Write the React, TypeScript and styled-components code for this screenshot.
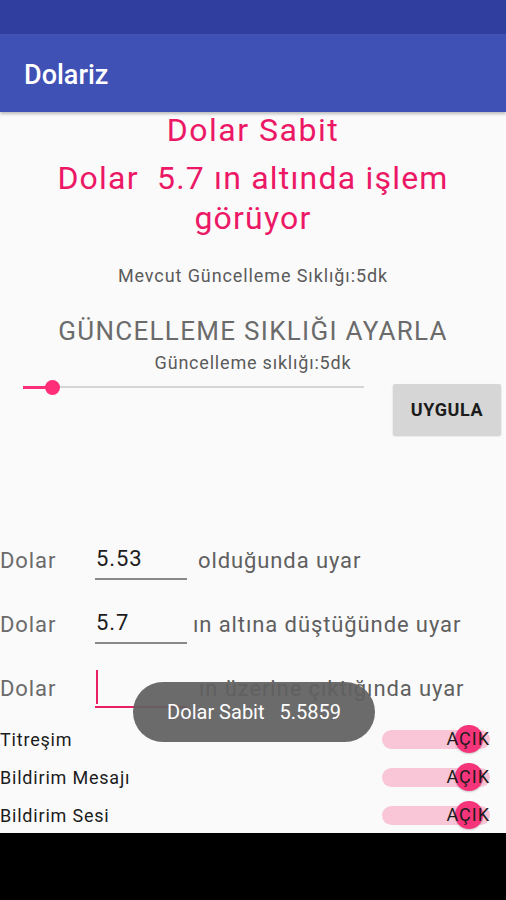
import styled, { createGlobalStyle } from "styled-components";

const GlobalStyle = createGlobalStyle`
  html, body {
    margin: 0;
    padding: 0;
    background: #000;
  }
  body {
    font-family: Roboto, "Noto Sans", sans-serif;
  }
`;

interface AlertRow {
  value: string;
  suffix: string;
  gap: number;
  focused?: boolean;
}

const alerts: AlertRow[] = [
  { value: "5.53", suffix: "olduğunda uyar", gap: 11 },
  { value: "5.7", suffix: "ın altına düştüğünde uyar", gap: 6 },
  { value: "", suffix: "ın üzerine çıktığında uyar", gap: 12, focused: true }
];

const toggles = ["Titreşim", "Bildirim Mesajı", "Bildirim Sesi"];

const App = () => {
  return (
    <>
      <GlobalStyle />
      <Screen>
        <StatusBar />
        <AppBar>
          <AppTitle>Dolariz</AppTitle>
        </AppBar>
        <Content>
          <Headline>Dolar Sabit</Headline>
          <SubHeadline>
            {"Dolar  5.7 ın altında işlem"}
            <br />
            görüyor
          </SubHeadline>
          <Current>Mevcut Güncelleme Sıklığı:5dk</Current>
          <SectionTitle>GÜNCELLEME SIKLIĞI AYARLA</SectionTitle>
          <Frequency>Güncelleme sıklığı:5dk</Frequency>
          <SliderRow>
            <Slider>
              <Track>
                <Fill style={{ width: 29 }} />
                <Thumb />
                <Rest />
              </Track>
            </Slider>
            <ApplyButton>UYGULA</ApplyButton>
          </SliderRow>
          <Alerts>
            {alerts.map((a, i) => (
              <Row key={i}>
                <RowLabel>Dolar</RowLabel>
                <Field $focused={a.focused}>
                  {a.focused ? <Cursor /> : a.value}
                </Field>
                <Suffix $gap={a.gap}>{a.suffix}</Suffix>
              </Row>
            ))}
          </Alerts>
          <Toggles>
            {toggles.map((t) => (
              <ToggleRow key={t}>
                <ToggleLabel>{t}</ToggleLabel>
                <Switch>
                  <SwitchTrack />
                  <SwitchThumb />
                  <SwitchText>AÇIK</SwitchText>
                </Switch>
              </ToggleRow>
            ))}
          </Toggles>
          <Toast>{"Dolar Sabit   5.5859"}</Toast>
        </Content>
      </Screen>
    </>
  );
};

const Screen = styled.div`
  width: 506px;
  height: 900px;
  display: flex;
  flex-direction: column;
  background: #000;
  overflow: hidden;
`;
const StatusBar = styled.div`
  height: 34px;
  background: #303f9f;
`;
const AppBar = styled.div`
  height: 78px;
  box-sizing: border-box;
  padding: 3px 0 0 24px;
  background: #3f51b5;
  display: flex;
  align-items: center;
  box-shadow: 0 2px 3px rgba(0, 0, 0, 0.25);
  position: relative;
  z-index: 1;
`;
const AppTitle = styled.h1`
  margin: 0;
  color: #fff;
  font-size: 27px;
  font-weight: 500;
`;
const Content = styled.div`
  position: relative;
  height: 721px;
  background: #fafafa;
  display: flex;
  flex-direction: column;
`;
const Headline = styled.div`
  color: #ec1866;
  font-size: 32px;
  letter-spacing: 1.5px;
  line-height: 36px;
  text-align: center;
`;
const SubHeadline = styled.div`
  color: #ec1866;
  font-size: 32px;
  letter-spacing: 1.2px;
  line-height: 40px;
  text-align: center;
  white-space: pre-wrap;
  margin-top: 10px;
`;
const Current = styled.div`
  color: #5a5a5a;
  font-size: 18px;
  letter-spacing: 0.9px;
  line-height: 24px;
  text-align: center;
  margin-top: 26px;
`;
const SectionTitle = styled.div`
  color: #6b6b6b;
  font-size: 26px;
  letter-spacing: 1.3px;
  line-height: 32px;
  text-align: center;
  margin-top: 27px;
`;
const Frequency = styled.div`
  color: #5a5a5a;
  font-size: 18px;
  letter-spacing: 0.8px;
  line-height: 22px;
  text-align: center;
  margin-top: 5px;
`;
const SliderRow = styled.div`
  display: flex;
  align-items: flex-start;
  padding: 0 5px 0 23px;
  gap: 29px;
`;
const Slider = styled.div`
  flex: 1;
  height: 26px;
  display: flex;
  align-items: center;
`;
const Track = styled.div`
  flex: 1;
  display: flex;
  align-items: center;
`;
const Fill = styled.div`
  height: 3px;
  background: #ff2e78;
`;
const Thumb = styled.div`
  width: 15px;
  height: 15px;
  border-radius: 50%;
  background: #ff2e78;
  margin: 0 -7px;
  position: relative;
  z-index: 1;
`;
const Rest = styled.div`
  flex: 1;
  height: 2px;
  background: #d6d6d6;
`;
const ApplyButton = styled.button`
  margin-top: 10px;
  width: 108px;
  height: 51px;
  border: none;
  border-radius: 2px;
  background: #d6d6d6;
  box-shadow: 0 1px 2px rgba(0, 0, 0, 0.2);
  font-family: Roboto, sans-serif;
  font-size: 18px;
  letter-spacing: 0.6px;
  font-weight: 700;
  color: #1c1c1c;
  padding: 0;
`;
const Alerts = styled.div`
  margin-top: 93px;
  display: flex;
  flex-direction: column;
`;
const Row = styled.div`
  height: 64px;
  display: flex;
  align-items: center;
  font-size: 22px;
  letter-spacing: 0.9px;
`;
const RowLabel = styled.span`
  width: 95px;
  color: #6b6b6b;
`;
const Field = styled.div<{ $focused?: boolean }>`
  width: 91px;
  height: 38px;
  line-height: 40px;
  box-sizing: content-box;
  border-bottom: 2px solid ${(p) => (p.$focused ? "#e91e63" : "#8a8a8a")};
  color: #1c1c1c;
  display: flex;
  align-items: center;
  padding-left: 1px;
`;
const Cursor = styled.div`
  width: 2px;
  height: 34px;
  background: #e91e63;
`;
const Suffix = styled.span<{ $gap: number }>`
  margin-left: ${(p) => p.$gap}px;
  color: #5f5f5f;
`;
const Toggles = styled.div`
  display: flex;
  flex-direction: column;
`;
const ToggleRow = styled.div`
  height: 38px;
  display: flex;
  align-items: center;
  justify-content: space-between;
  padding-right: 16px;
`;
const ToggleLabel = styled.span`
  font-size: 18px;
  letter-spacing: 0.8px;
  color: #1c1c1c;
`;
const Switch = styled.div`
  position: relative;
  width: 108px;
  height: 28px;
  display: flex;
  align-items: center;
`;
const SwitchTrack = styled.div`
  width: 100%;
  height: 19px;
  border-radius: 10px;
  background: #f9c6d8;
`;
const SwitchThumb = styled.div`
  position: absolute;
  right: 7px;
  top: 0;
  width: 28px;
  height: 28px;
  border-radius: 50%;
  background: #f5347a;
  box-shadow: 0 1px 2px rgba(0, 0, 0, 0.2);
`;
const SwitchText = styled.span`
  position: absolute;
  right: 0;
  top: 3px;
  font-size: 18px;
  letter-spacing: 1px;
  line-height: 22px;
  color: #1c1c1c;
`;
const Toast = styled.div`
  position: absolute;
  left: 133px;
  top: 570px;
  width: 242px;
  height: 60px;
  border-radius: 30px;
  background: rgba(96, 96, 96, 0.93);
  color: #fff;
  font-size: 20px;
  white-space: pre;
  display: flex;
  align-items: center;
  justify-content: center;
`;

export default App;
